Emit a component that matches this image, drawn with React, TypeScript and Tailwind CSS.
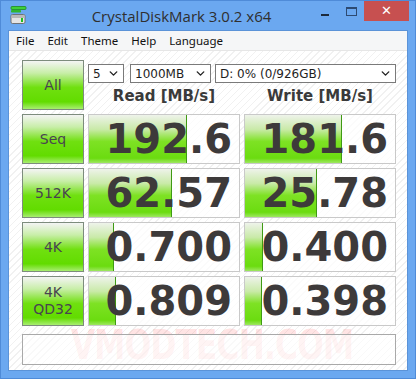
import { ChevronDown } from 'lucide-react';

const rows = [
  { label: ['Seq'], read: '192.6', write: '181.6', readBar: 98, writeBar: 97 },
  { label: ['512K'], read: '62.57', write: '25.78', readBar: 83, writeBar: 72 },
  { label: ['4K'], read: '0.700', write: '0.400', readBar: 25, writeBar: 18 },
  { label: ['4K', 'QD32'], read: '0.809', write: '0.398', readBar: 27, writeBar: 17 },
];

function Btn({ lines }: { lines: string[] }) {
  return (
    <div className="w-[62px] h-[50px] flex flex-col items-center justify-center border border-[#7d8c7d] bg-[linear-gradient(to_bottom,#f4f4f4_0%,#c8eea8_25%,#70e010_55%,#62dc00_85%,#a8ee70_100%)]">
      {lines.map((l) => (
        <span key={l} className="text-[14px] leading-[17px] text-[#484450] font-['DejaVu_Sans',sans-serif]">
          {l}
        </span>
      ))}
    </div>
  );
}

function Cell({ value, bar }: { value: string; bar: number }) {
  return (
    <div className="relative w-[152px] h-[50px] border border-[#c9c9c9] bg-white/70 flex items-center justify-end pr-[7px]">
      <div
        className="absolute left-0 top-0 bottom-0 border-r border-[#3f9a14] bg-[linear-gradient(to_bottom,#eef3ea_0%,#c9eaa8_30%,#7ee224_55%,#6bdc10_90%,#9ee860_100%)]"
        style={{ width: bar }}
      />
      <span className="relative text-[40px] leading-none font-bold text-[#3d3a3a] font-['DejaVu_Sans',sans-serif]">
        {value}
      </span>
    </div>
  );
}

function Select({ text, className }: { text: string; className: string }) {
  return (
    <div
      className={`h-[19px] bg-white border border-[#7a7a7a] flex items-center justify-between pl-[4px] pr-[3px] text-[12px] text-[#1e1e1e] font-['DejaVu_Sans',sans-serif] ${className}`}
    >
      <span>{text}</span>
      <ChevronDown size={13} strokeWidth={2.6} className="text-[#222]" />
    </div>
  );
}

export default function App() {
  return (
    <div className="w-[416px] h-[379px] bg-[#6ba8f0] border border-[#4f8bd8] flex flex-col overflow-hidden">
      {/* title bar */}
      <div className="relative h-[29px] flex items-start">
        <svg className="ml-[9px] mt-[5px]" width="17" height="18" viewBox="0 0 17 18">
          <rect x="1" y="0.5" width="15" height="3" rx="1" fill="#3ed03a" stroke="#1f8a1f" strokeWidth="0.8" />
          <rect x="1" y="4" width="10" height="2.5" rx="0.8" fill="#2fb52f" />
          <rect x="1" y="8.5" width="14" height="9" rx="1.5" fill="#e4e4e4" stroke="#6a6a6a" strokeWidth="0.9" />
          <rect x="1.5" y="9" width="13" height="3" fill="#b9b9b9" />
          <rect x="11" y="12" width="2" height="4" fill="#1fbf1f" />
        </svg>
        <div className="flex-1 text-center pt-[4px] text-[15px] text-[#2f2f2f] font-['Open_Sans',sans-serif] pl-[24px]">
          CrystalDiskMark 3.0.2 x64
        </div>
        <div className="flex items-start">
          <div className="w-[26px] h-[20px] flex items-center justify-center">
            <div className="mt-[8px] w-[8px] h-[2px] bg-[#1c2a3c]" />
          </div>
          <div className="w-[26px] h-[20px] flex items-center justify-center">
            <div className="w-[11px] h-[9px] border border-[#2d4a72] border-t-2" />
          </div>
          <div className="w-[45px] h-[20px] mr-[6px] bg-[#c75050] flex items-center justify-center text-white text-[13px] font-bold font-['DejaVu_Sans',sans-serif]">
            ✕
          </div>
        </div>
      </div>

      {/* client */}
      <div className="mx-[7px] mb-[7px] flex-1 flex flex-col border border-[#5b93d8] bg-white">
        <div className="h-[19px] bg-[#f5f6f7] flex items-center gap-[13px] pl-[7px] text-[11.5px] text-[#111] font-['Noto_Sans',sans-serif]">
          <span>File</span>
          <span>Edit</span>
          <span>Theme</span>
          <span>Help</span>
          <span>Language</span>
        </div>
        <div className="relative flex-1 flex flex-col gap-[4px] pl-[13px] pt-[9px] border-t border-[#e6e6e6] bg-[repeating-linear-gradient(135deg,#ffffff_0px,#ffffff_4px,#f1f1f1_4px,#f1f1f1_5px)]">
          <div className="absolute left-[62px] top-[264px] text-[40px] font-bold tracking-[-1px] scale-x-[0.78] origin-left text-[#ff2a2a]/15 font-['DejaVu_Sans',sans-serif] whitespace-nowrap">
            VMODTECH.COM
          </div>

          <div className="relative flex gap-[4px] h-[50px]">
            <Btn lines={['All']} />
            <div className="flex flex-col">
              <div className="flex mt-[4px]">
                <Select text="5" className="w-[36px]" />
                <Select text="1000MB" className="w-[81px] ml-[6px]" />
                <Select text="D: 0% (0/926GB)" className="w-[181px] ml-[4px]" />
              </div>
              <div className="flex flex-1 items-center text-[15px] font-bold text-[#3a3a3a] font-['DejaVu_Sans',sans-serif]">
                <div className="w-[152px] text-center">Read [MB/s]</div>
                <div className="w-[152px] ml-[4px] text-center">Write [MB/s]</div>
              </div>
            </div>
          </div>

          {rows.map((r) => (
            <div key={r.read} className="relative flex gap-[4px]">
              <Btn lines={r.label} />
              <Cell value={r.read} bar={r.readBar} />
              <Cell value={r.write} bar={r.writeBar} />
            </div>
          ))}

          <div className="relative mt-[4px] w-[374px] h-[31px] border border-[#a9a9a9] bg-white/60" />
        </div>
      </div>
    </div>
  );
}
